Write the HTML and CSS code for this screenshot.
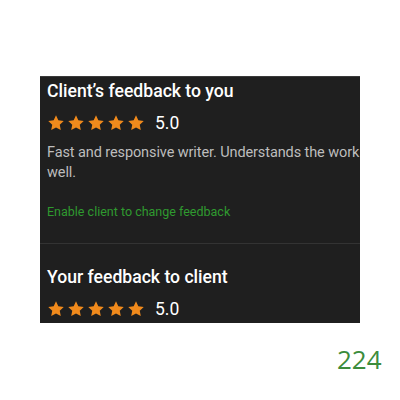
FILE: index.html
```html
<!DOCTYPE html>
<html lang="en">

<head>
    <meta charset="UTF-8">
    <title>Feedback</title>
    <link rel="stylesheet" href="styles.css">
</head>

<body>
    <div class="card">
        <!-- Feedback received -->
        <section class="block">
            <h2 class="title">Client’s feedback to you</h2>
            <div class="rating">
                <span class="stars">
                    <svg viewBox="0 0 24 24"><path d="M12 1.8l3.1 6.6 7.2.9-5.3 5 1.4 7.1L12 17.9l-6.4 3.5 1.4-7.1-5.3-5 7.2-.9z"/></svg>
                    <svg viewBox="0 0 24 24"><path d="M12 1.8l3.1 6.6 7.2.9-5.3 5 1.4 7.1L12 17.9l-6.4 3.5 1.4-7.1-5.3-5 7.2-.9z"/></svg>
                    <svg viewBox="0 0 24 24"><path d="M12 1.8l3.1 6.6 7.2.9-5.3 5 1.4 7.1L12 17.9l-6.4 3.5 1.4-7.1-5.3-5 7.2-.9z"/></svg>
                    <svg viewBox="0 0 24 24"><path d="M12 1.8l3.1 6.6 7.2.9-5.3 5 1.4 7.1L12 17.9l-6.4 3.5 1.4-7.1-5.3-5 7.2-.9z"/></svg>
                    <svg viewBox="0 0 24 24"><path d="M12 1.8l3.1 6.6 7.2.9-5.3 5 1.4 7.1L12 17.9l-6.4 3.5 1.4-7.1-5.3-5 7.2-.9z"/></svg>
                </span>
                <span class="score">5.0</span>
            </div>
            <p class="comment">Fast and responsive writer. Understands the work well.</p>
            <a class="link" href="#">Enable client to change feedback</a>
        </section>

        <!-- Feedback given -->
        <section class="block block-second">
            <h2 class="title">Your feedback to client</h2>
            <div class="rating">
                <span class="stars">
                    <svg viewBox="0 0 24 24"><path d="M12 1.8l3.1 6.6 7.2.9-5.3 5 1.4 7.1L12 17.9l-6.4 3.5 1.4-7.1-5.3-5 7.2-.9z"/></svg>
                    <svg viewBox="0 0 24 24"><path d="M12 1.8l3.1 6.6 7.2.9-5.3 5 1.4 7.1L12 17.9l-6.4 3.5 1.4-7.1-5.3-5 7.2-.9z"/></svg>
                    <svg viewBox="0 0 24 24"><path d="M12 1.8l3.1 6.6 7.2.9-5.3 5 1.4 7.1L12 17.9l-6.4 3.5 1.4-7.1-5.3-5 7.2-.9z"/></svg>
                    <svg viewBox="0 0 24 24"><path d="M12 1.8l3.1 6.6 7.2.9-5.3 5 1.4 7.1L12 17.9l-6.4 3.5 1.4-7.1-5.3-5 7.2-.9z"/></svg>
                    <svg viewBox="0 0 24 24"><path d="M12 1.8l3.1 6.6 7.2.9-5.3 5 1.4 7.1L12 17.9l-6.4 3.5 1.4-7.1-5.3-5 7.2-.9z"/></svg>
                </span>
                <span class="score">5.0</span>
            </div>
        </section>
    </div>

    <div class="counter">224</div>
</body>

</html>
```

FILE: styles.css
```css
body {
    margin: 0;
    background: #fff;
    font-family: Roboto, 'Liberation Sans', Arial, sans-serif;
}

.card {
    margin: 76px 0 0 40px;
    width: 320px;
    height: 247px;
    box-sizing: border-box;
    background: #1f1f1f;
    border-top: 1px solid #3a3a3a;
    overflow: hidden;
}

.block {
    padding: 0 0 0 7px;
}

.title {
    margin: 0;
    padding-top: 3px;
    font-size: 17.6px;
    font-weight: 500;
    color: #fff;
    line-height: 22px;
}

.rating {
    display: flex;
    align-items: center;
    margin-top: 11px;
    height: 20px;
}

.stars {
    display: flex;
    gap: 2px;
}

.stars svg {
    width: 18px;
    height: 18px;
    fill: #f08a1c;
}

.score {
    margin-left: 10px;
    font-size: 17.5px;
    color: #fff;
}

.comment {
    margin: 10px 0 0;
    font-size: 14.5px;
    line-height: 20px;
    letter-spacing: -0.1px;
    color: #bdbdbd;
}

.link {
    display: block;
    margin-top: 21px;
    font-size: 12.5px;
    color: #2f9a2f;
    text-decoration: none;
}

.block-second {
    margin-top: 24px;
    border-top: 1px solid #333;
    padding-top: 19px;
}

.counter {
    margin: 21px 0 0 337px;
    font-family: 'Open Sans', sans-serif;
    font-size: 26px;
    line-height: 30px;
    color: #3c8c3c;
}
```
